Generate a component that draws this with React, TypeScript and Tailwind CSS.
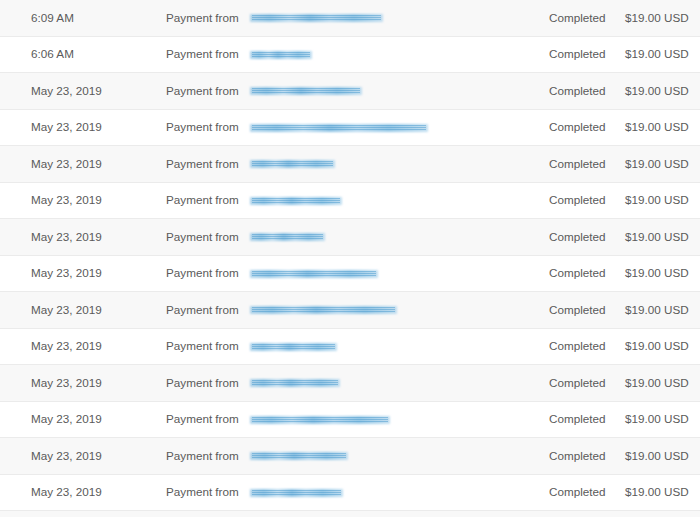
import React from "react";

const rows = [
  { when: "6:09 AM", name: 133 },
  { when: "6:06 AM", name: 62 },
  { when: "May 23, 2019", name: 112 },
  { when: "May 23, 2019", name: 178 },
  { when: "May 23, 2019", name: 85 },
  { when: "May 23, 2019", name: 92 },
  { when: "May 23, 2019", name: 75 },
  { when: "May 23, 2019", name: 128 },
  { when: "May 23, 2019", name: 147 },
  { when: "May 23, 2019", name: 87 },
  { when: "May 23, 2019", name: 90 },
  { when: "May 23, 2019", name: 140 },
  { when: "May 23, 2019", name: 98 },
  { when: "May 23, 2019", name: 93 },
];

// redacted payer name: a smeared, streaky blue band
function BlurredName({ width }: { width: number }) {
  return (
    <div className="relative h-[11px] mt-[2px]" style={{ width }}>
      <div className="absolute inset-x-0 top-[1px] h-[8px] blur-[1.2px] bg-[linear-gradient(90deg,#9fcbe7_0%,#7ab9df_15%,#b3d7ee_30%,#6fb2dc_45%,#a8d1ec_60%,#7bbae0_78%,#b5d8ee_100%)] opacity-80" />
      <div className="absolute inset-x-[2px] top-[2px] h-[6px] blur-[0.6px] bg-[repeating-linear-gradient(180deg,#4b9bcf_0px,#4b9bcf_1px,transparent_1px,transparent_2px)] opacity-50" />
    </div>
  );
}

export default function App() {
  return (
    <div className="w-[700px] h-[517px] overflow-hidden bg-white font-['Liberation_Sans',Arial,sans-serif] text-[11.7px] text-[#5a5a5a]">
      {rows.map((r, i) => (
        <div
          key={i}
          className={`flex items-center h-[36.5px] border-b border-[#ebebeb] ${i % 2 === 0 ? "bg-[#f8f8f8]" : "bg-white"}`}
        >
          <div className="w-[166px] pl-[31px] shrink-0">{r.when}</div>
          <div className="w-[84px] shrink-0">Payment from</div>
          <div className="flex-1">
            <BlurredName width={r.name} />
          </div>
          <div className="w-[76px] shrink-0">Completed</div>
          <div className="w-[75px] shrink-0">$19.00 USD</div>
        </div>
      ))}
      <div className="h-[40px] bg-[#f8f8f8]" />
    </div>
  );
}
